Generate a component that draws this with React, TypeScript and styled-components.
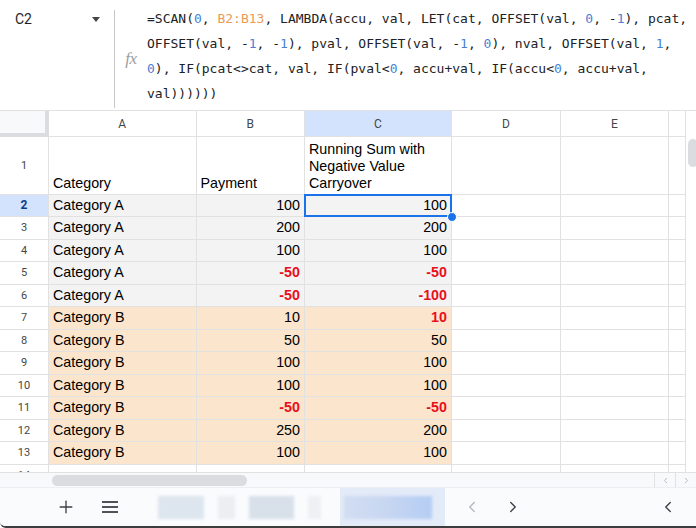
import { FC } from "react";
import styled, { createGlobalStyle, css } from "styled-components";
import { Plus, ChevronLeft, ChevronRight } from "lucide-react";

const GRID = "#e1e1e1";
const HEAD_W = 49;
const COLS = [147.5, 108.5, 147, 109, 108, 16];
const LETTERS = ["A", "B", "C", "D", "E", ""];

const GlobalStyle = createGlobalStyle`
    html, body {
        margin: 0;
        padding: 0;
        background: #ffffff;
    }
    body {
        font-family: "Liberation Sans", Arial, sans-serif;
        overflow: hidden;
    }
    * {
        box-sizing: border-box;
    }
`;

const Frame = styled.div`
    width: 696px;
    height: 528px;
    display: flex;
    flex-direction: column;
    background: #ffffff;
    overflow: hidden;
    border-bottom: 2px solid #3d3d3d;
    border-bottom-left-radius: 6px;
`;

/* ---------- formula bar ---------- */

const FormulaBar = styled.div`
    height: 111px;
    flex-shrink: 0;
    display: flex;
    border-bottom: 1px solid ${GRID};
`;

const NameBox = styled.div`
    width: 114px;
    display: flex;
    align-items: flex-start;
    justify-content: space-between;
    padding: 10px 14px 0 15px;
    font-family: Roboto, "Liberation Sans", sans-serif;
    font-size: 14px;
    line-height: 18px;
    color: #1f1f1f;
`;

const Caret = styled.span`
    margin-top: 7px;
    width: 0;
    height: 0;
    border-left: 4px solid transparent;
    border-right: 4px solid transparent;
    border-top: 5px solid #444746;
`;

const Divider = styled.div`
    width: 1px;
    height: 98px;
    margin-top: 10px;
    background: #c7c7c7;
`;

const FxCell = styled.div`
    width: 32px;
    display: flex;
    align-items: center;
    justify-content: center;
    padding-top: 8px;
    font-family: "Liberation Serif", serif;
    font-style: italic;
    font-size: 17px;
    color: #9e9e9e;
    letter-spacing: -0.5px;
`;

const Formula = styled.div`
    flex: 1;
    padding-top: 6px;
    font-family: "DejaVu Sans Mono", "Liberation Mono", monospace;
    font-size: 13px;
    line-height: 25px;
    color: #202124;
    white-space: pre;
`;

const Line = styled.div``;

const Num = styled.span`
    color: #4a7fd6;
`;

const Range = styled.span`
    color: #ec9a56;
`;

/* ---------- grid ---------- */

const GridArea = styled.div`
    display: flex;
    height: 361px;
    flex-shrink: 0;
`;

const Sheet = styled.div`
    width: 685px;
    overflow: hidden;
`;

const Row = styled.div<{ $h: number }>`
    display: flex;
    height: ${p => p.$h}px;
    flex-shrink: 0;
`;

const Corner = styled.div`
    width: ${HEAD_W}px;
    height: 100%;
    background: #f8f9fa;
    border-right: 4px solid #dadce0;
    border-bottom: 4px solid #dadce0;
`;

const ColHead = styled.div<{ $w: number; $active?: boolean; $last?: boolean }>`
    width: ${p => p.$w}px;
    height: 100%;
    display: flex;
    align-items: center;
    justify-content: center;
    font-family: Roboto, "Liberation Sans", sans-serif;
    font-size: 12px;
    color: #444746;
    border-bottom: 1px solid ${GRID};
    border-right: ${p => (p.$last ? "none" : `1px solid ${GRID}`)};
    background: ${p => (p.$active ? "#d3e3fd" : "#ffffff")};
`;

const RowHead = styled.div<{ $active?: boolean }>`
    width: ${HEAD_W}px;
    height: 100%;
    display: flex;
    align-items: center;
    justify-content: center;
    font-family: Roboto, "Liberation Sans", sans-serif;
    font-size: 11px;
    color: #444746;
    border-right: 1px solid ${GRID};
    border-bottom: 1px solid ${GRID};
    ${p => p.$active && css`
        background: #d3e3fd;
        color: #0b3a8a;
        font-weight: bold;
        font-size: 12px;
    `}
`;

const Cell = styled.div<{
    $w: number;
    $bg?: string;
    $right?: boolean;
    $red?: boolean;
    $last?: boolean;
    $bottom?: boolean;
}>`
    position: relative;
    width: ${p => p.$w}px;
    height: 100%;
    display: flex;
    align-items: ${p => (p.$bottom ? "flex-end" : "center")};
    justify-content: ${p => (p.$right ? "flex-end" : "flex-start")};
    padding: ${p => (p.$bottom ? "0 4px 2px" : "0 4px")};
    background: ${p => p.$bg ?? "#ffffff"};
    border-bottom: 1px solid ${GRID};
    border-right: ${p => (p.$last ? "none" : `1px solid ${GRID}`)};
    font-size: 14.3px;
    line-height: 17px;
    color: ${p => (p.$red ? "#e8101c" : "#000000")};
    font-weight: ${p => (p.$red ? "bold" : "normal")};
    white-space: nowrap;
`;

const Wrapped = styled.span`
    white-space: normal;
`;

const Selection = styled.span`
    position: absolute;
    top: -1px;
    left: -1px;
    right: -1px;
    bottom: -1px;
    border: 2px solid #1a73e8;
    z-index: 2;
`;

const Handle = styled.span`
    position: absolute;
    right: -6px;
    bottom: -6px;
    width: 10px;
    height: 10px;
    border-radius: 50%;
    background: #1a73e8;
    border: 1px solid #ffffff;
    z-index: 3;
`;

const VScroll = styled.div`
    width: 11px;
    border-left: 1px solid ${GRID};
    padding-top: 28px;
`;

const VThumb = styled.div`
    width: 10px;
    height: 28px;
    margin-left: 2px;
    border-radius: 5px;
    background: #dadce0;
`;

const HScroll = styled.div`
    height: 15px;
    flex-shrink: 0;
    display: flex;
    align-items: center;
    background: #f8f9fa;
    border-top: 1px solid ${GRID};
`;

const HThumb = styled.div`
    width: 195px;
    height: 11px;
    margin-left: 52px;
    border-radius: 6px;
    background: #dadce0;
`;

const ArrowBox = styled.div<{ $first?: boolean }>`
    width: 21px;
    height: 100%;
    display: flex;
    align-items: center;
    justify-content: center;
    border-left: 1px solid ${GRID};
    color: #a0a4a8;
    ${p => p.$first && css`
        margin-left: auto;
    `}
`;

/* ---------- bottom bar ---------- */

const BottomBar = styled.div`
    height: 39px;
    flex-shrink: 0;
    display: flex;
    align-items: center;
    background: #f9fbfd;
    border-top: 1px solid #eceef1;
    padding-left: 56px;
`;

const IconBtn = styled.div<{ $ml?: number; $muted?: boolean }>`
    width: 20px;
    height: 20px;
    display: flex;
    align-items: center;
    justify-content: center;
    margin-left: ${p => p.$ml ?? 0}px;
    color: ${p => (p.$muted ? "#b4b7bb" : "#3c4043")};
`;

const TabsBlur = styled.div`
    display: flex;
    align-items: center;
    gap: 14px;
    margin-left: 38px;
    width: 182px;
    height: 100%;
`;

const Blob = styled.div<{ $w: number; $c: string }>`
    width: ${p => p.$w}px;
    height: 23px;
    background: ${p => p.$c};
    filter: blur(1.5px);
`;

const ActiveTab = styled.div`
    width: 105px;
    height: 100%;
    display: flex;
    align-items: center;
    padding-left: 4px;
    background: #e3eaf8;
`;

const ActiveBlob = styled.div`
    width: 88px;
    height: 23px;
    background: linear-gradient(90deg, #d2ddf2 0%, #c8d7f1 45%, #b5cdf3 100%);
    filter: blur(1.5px);
`;

const MenuGlyph: FC = () => (
    <svg width="18" height="14" viewBox="0 0 18 14" fill="none" stroke="currentColor" strokeWidth="1.8">
        <line x1="1" y1="2" x2="17" y2="2" />
        <line x1="1" y1="7" x2="17" y2="7" />
        <line x1="1" y1="12" x2="17" y2="12" />
    </svg>
);

type Entry = { cat: "A" | "B"; pay: number; run: number; flag?: boolean };

const data: Entry[] = [
    { cat: "A", pay: 100, run: 100 },
    { cat: "A", pay: 200, run: 200 },
    { cat: "A", pay: 100, run: 100 },
    { cat: "A", pay: -50, run: -50 },
    { cat: "A", pay: -50, run: -100 },
    { cat: "B", pay: 10, run: 10, flag: true },
    { cat: "B", pay: 50, run: 50 },
    { cat: "B", pay: 100, run: 100 },
    { cat: "B", pay: 100, run: 100 },
    { cat: "B", pay: -50, run: -50 },
    { cat: "B", pay: 250, run: 200 },
    { cat: "B", pay: 100, run: 100 },
];

const fill = { A: "#f3f3f3", B: "#fce5cd" };

const EmptyCells: FC = () => (
    <>
        {COLS.slice(3).map((w, i) => (
            <Cell key={i} $w={w} $last={i === 2} />
        ))}
    </>
);

export default function App() {
    return (
        <Frame>
            <GlobalStyle />
            <FormulaBar>
                <NameBox>
                    C2
                    <Caret />
                </NameBox>
                <Divider />
                <FxCell>fx</FxCell>
                <Formula>
                    <Line>=SCAN(<Num>0</Num>, <Range>B2:B13</Range>, LAMBDA(accu, val, LET(cat, OFFSET(val, <Num>0</Num>, -<Num>1</Num>), pcat,</Line>
                    <Line>OFFSET(val, -<Num>1</Num>, -<Num>1</Num>), pval, OFFSET(val, -<Num>1</Num>, <Num>0</Num>), nval, OFFSET(val, <Num>1</Num>,</Line>
                    <Line><Num>0</Num>), IF(pcat&lt;&gt;cat, val, IF(pval&lt;<Num>0</Num>, accu+val, IF(accu&lt;<Num>0</Num>, accu+val,</Line>
                    <Line>val))))))</Line>
                </Formula>
            </FormulaBar>

            <GridArea>
                <Sheet>
                    <Row $h={26}>
                        <Corner />
                        {COLS.map((w, i) => (
                            <ColHead key={i} $w={w} $active={i === 2} $last={i === COLS.length - 1}>
                                {LETTERS[i]}
                            </ColHead>
                        ))}
                    </Row>

                    <Row $h={57.5}>
                        <RowHead>1</RowHead>
                        <Cell $w={COLS[0]} $bottom>Category</Cell>
                        <Cell $w={COLS[1]} $bottom>Payment</Cell>
                        <Cell $w={COLS[2]} $bottom>
                            <Wrapped>Running Sum with Negative Value Carryover</Wrapped>
                        </Cell>
                        <EmptyCells />
                    </Row>

                    {data.map((d, i) => (
                        <Row $h={22.5} key={i}>
                            <RowHead $active={i === 0}>{i + 2}</RowHead>
                            <Cell $w={COLS[0]} $bg={fill[d.cat]}>Category {d.cat}</Cell>
                            <Cell $w={COLS[1]} $bg={fill[d.cat]} $right $red={d.pay < 0}>{d.pay}</Cell>
                            <Cell $w={COLS[2]} $bg={fill[d.cat]} $right $red={d.run < 0 || d.flag}>
                                {d.run}
                                {i === 0 && (
                                    <>
                                        <Selection />
                                        <Handle />
                                    </>
                                )}
                            </Cell>
                            <EmptyCells />
                        </Row>
                    ))}

                    <Row $h={22.5}>
                        <RowHead>14</RowHead>
                        <Cell $w={COLS[0]} />
                        <Cell $w={COLS[1]} />
                        <Cell $w={COLS[2]} />
                        <EmptyCells />
                    </Row>
                </Sheet>
                <VScroll>
                    <VThumb />
                </VScroll>
            </GridArea>

            <HScroll>
                <HThumb />
                <ArrowBox $first>
                    <ChevronLeft size={9} strokeWidth={2} />
                </ArrowBox>
                <ArrowBox>
                    <ChevronRight size={9} strokeWidth={2} />
                </ArrowBox>
            </HScroll>

            <BottomBar>
                <IconBtn>
                    <Plus size={20} strokeWidth={1.6} />
                </IconBtn>
                <IconBtn $ml={24}>
                    <MenuGlyph />
                </IconBtn>
                <TabsBlur>
                    <Blob $w={46} $c="#dde5ee" />
                    <Blob $w={17} $c="#eceef1" />
                    <Blob $w={45} $c="#d8e0ea" />
                    <Blob $w={13} $c="#eef0f3" />
                </TabsBlur>
                <ActiveTab>
                    <ActiveBlob />
                </ActiveTab>
                <IconBtn $ml={17} $muted>
                    <ChevronLeft size={18} strokeWidth={1.8} />
                </IconBtn>
                <IconBtn $ml={21}>
                    <ChevronRight size={18} strokeWidth={1.8} />
                </IconBtn>
                <IconBtn $ml={135}>
                    <ChevronLeft size={18} strokeWidth={1.8} />
                </IconBtn>
            </BottomBar>
        </Frame>
    );
}
